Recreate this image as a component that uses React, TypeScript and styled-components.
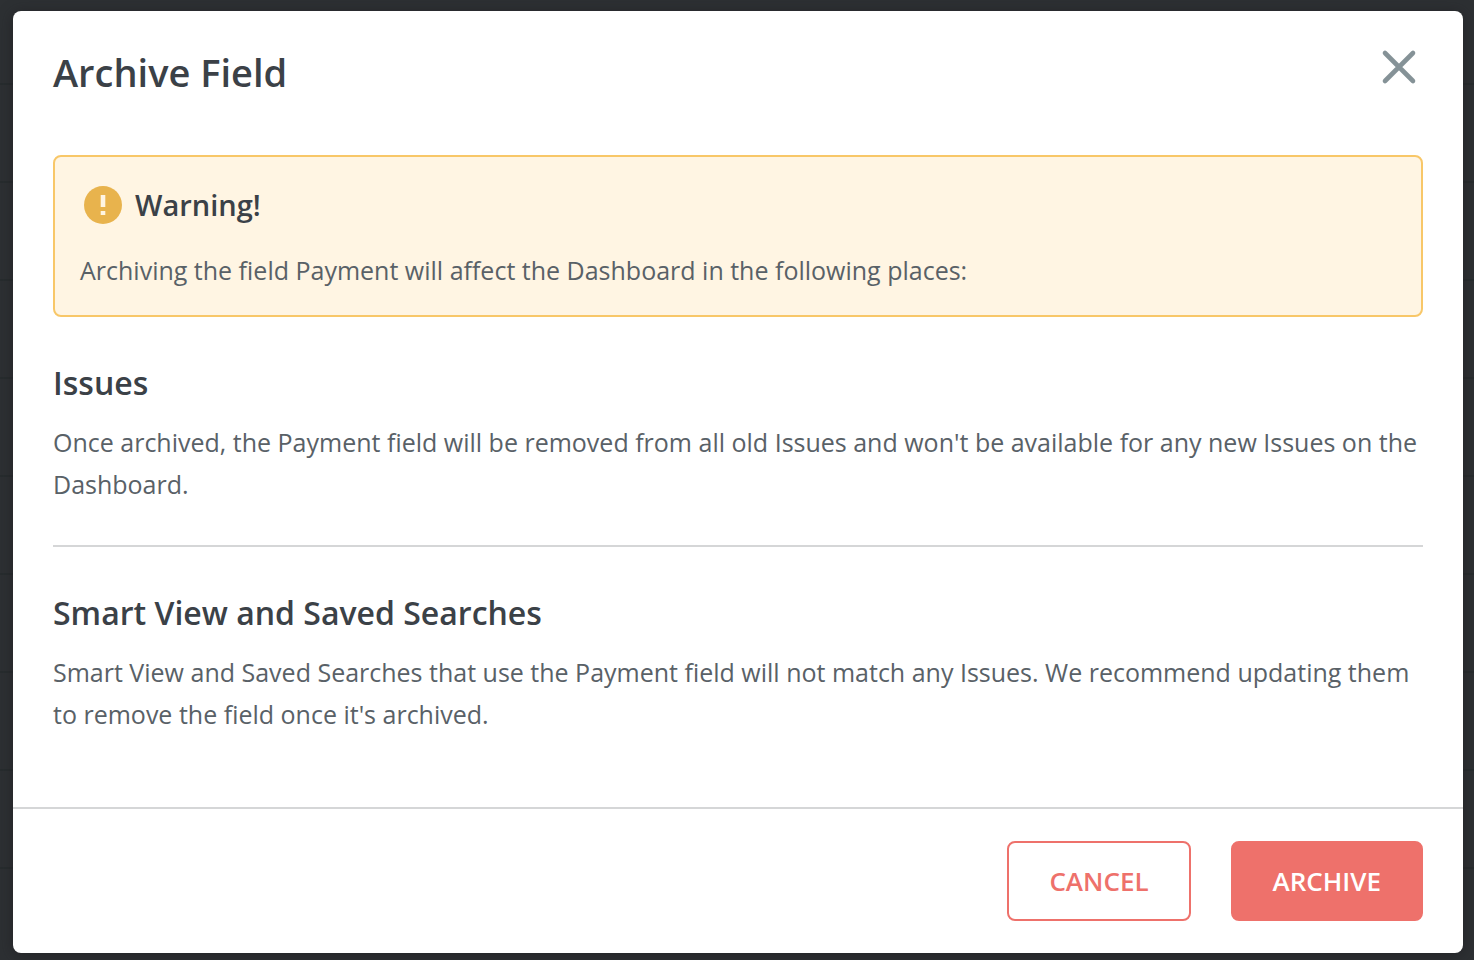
import React from "react";
import styled, { createGlobalStyle, css } from "styled-components";

const GlobalStyle = createGlobalStyle`
  *, *::before, *::after { box-sizing: border-box; }
  body {
    margin: 0;
    font-family: "Open Sans", "Noto Sans", sans-serif;
    font-size: 25px;
    line-height: 42px;
    color: #596167;
  }
  h1, h2, h3, p { margin: 0; }
`;

const Backdrop = styled.div`
  display: flex;
  min-height: 100vh;
  padding: 11px 11px 7px 13px;
  background: repeating-linear-gradient(
    to bottom,
    #2d3033 0,
    #2d3033 83px,
    #272c2e 83px,
    #272c2e 85px,
    #2d3033 85px,
    #2d3033 98px
  );
`;

const Dialog = styled.section`
  flex: 1;
  display: flex;
  flex-direction: column;
  border-radius: 8px;
  background: #fff;
  box-shadow: 0 2px 14px rgba(28, 26, 30, 0.6);
`;

const Header = styled.header`
  display: flex;
  align-items: flex-start;
  justify-content: space-between;
  padding: 36px 40px 0;
`;

const Title = styled.h1`
  font-size: 38px;
  line-height: 50px;
  font-weight: 600;
  color: #3b4147;
`;

const CloseButton = styled.button`
  display: flex;
  padding: 0;
  margin-right: 4px;
  border: 0;
  background: none;
  cursor: pointer;
`;

const Content = styled.div`
  flex: 1;
  padding: 58px 40px 64px;
`;

const Alert = styled.div`
  padding: 28px 25px 24px;
  border: 2px solid #f8c768;
  border-radius: 8px;
  background: #fff5e3;
`;

const AlertHeading = styled.div`
  display: flex;
  align-items: center;
  gap: 13px;
  padding-left: 4px;
  margin-bottom: 24px;
`;

const AlertTitle = styled.h3`
  font-size: 29px;
  line-height: 40px;
  font-weight: 600;
  color: #3b4147;
`;

const Section = styled.section`
  padding: 42px 0 40px;
  & + & {
    border-top: 2px solid #d5d6d7;
  }
  &:last-child {
    padding-bottom: 0;
  }
`;

const SectionTitle = styled.h2`
  margin-bottom: 14px;
  font-size: 32px;
  line-height: 48px;
  font-weight: 600;
  color: #3b4147;
`;

const Footer = styled.footer`
  display: flex;
  justify-content: flex-end;
  gap: 40px;
  padding: 32px 40px;
  border-top: 2px solid #d5d6d7;
`;

const ActionButton = styled.button<{ $primary?: boolean }>`
  height: 80px;
  padding: 0 40px;
  border: 2px solid #ee716b;
  border-radius: 8px;
  font: 600 26px/40px "Open Sans", "Noto Sans", sans-serif;
  cursor: pointer;
  ${({ $primary }) =>
    $primary
      ? css`
          background: #ee716b;
          color: #fff;
        `
      : css`
          background: #fff;
          color: #ee716b;
        `}
`;

const CloseIcon = () => (
  <svg width="40" height="40" viewBox="0 0 40 40" aria-hidden="true">
    <path d="M6 6 34 34M34 6 6 34" stroke="#859297" strokeWidth="4.6" strokeLinecap="round" fill="none" />
  </svg>
);

const WarningIcon = () => (
  <svg width="38" height="38" viewBox="0 0 38 38" aria-hidden="true">
    <circle cx="19" cy="19" r="19" fill="#e8b34d" />
    <path d="M16.7 9h4.6v12h-4.6zM16.7 25h4.6v4h-4.6z" fill="#fff5e3" />
  </svg>
);

const sections = [
  {
    title: "Issues",
    text: "Once archived, the Payment field will be removed from all old Issues and won't be available for any new Issues on the Dashboard.",
  },
  {
    title: "Smart View and Saved Searches",
    text: "Smart View and Saved Searches that use the Payment field will not match any Issues. We recommend updating them to remove the field once it's archived.",
  },
];

export default function App() {
  return (
    <>
      <GlobalStyle />
      <Backdrop>
        <Dialog role="dialog" aria-modal="true" aria-labelledby="dialog-title">
          <Header>
            <Title id="dialog-title">Archive Field</Title>
            <CloseButton type="button" aria-label="Close">
              <CloseIcon />
            </CloseButton>
          </Header>
          <Content>
            <Alert role="alert">
              <AlertHeading>
                <WarningIcon />
                <AlertTitle>Warning!</AlertTitle>
              </AlertHeading>
              <p>Archiving the field Payment will affect the Dashboard in the following places:</p>
            </Alert>
            {sections.map(({ title, text }) => (
              <Section key={title}>
                <SectionTitle>{title}</SectionTitle>
                <p>{text}</p>
              </Section>
            ))}
          </Content>
          <Footer>
            <ActionButton type="button">CANCEL</ActionButton>
            <ActionButton type="button" $primary>
              ARCHIVE
            </ActionButton>
          </Footer>
        </Dialog>
      </Backdrop>
    </>
  );
}
